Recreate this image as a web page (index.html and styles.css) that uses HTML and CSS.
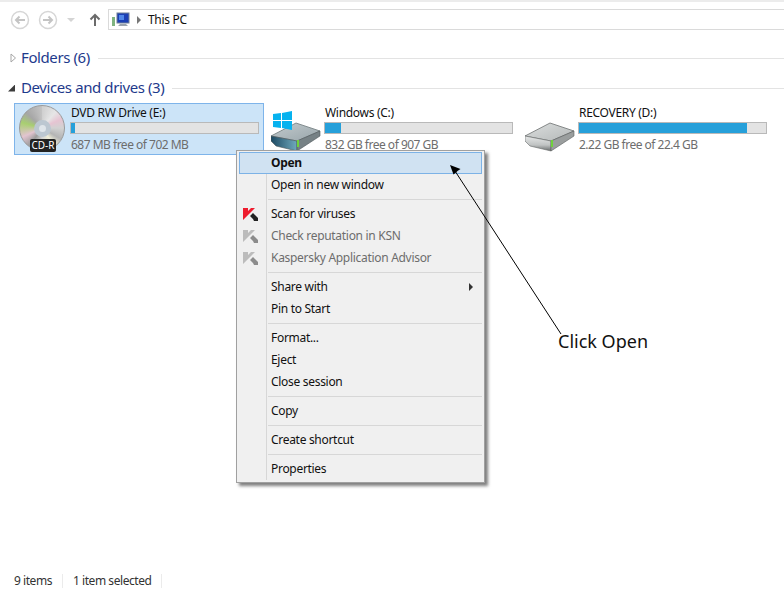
FILE: index.html
```html
<!DOCTYPE html>
<html lang="en">
<head>
  <meta charset="UTF-8">
  <title>This PC</title>
  <link rel="stylesheet" href="styles.css">
</head>
<body>
  <div class="window">
    <div class="navbar">
      <span class="nav-btn">
        <svg width="20" height="20" viewBox="0 0 20 20"><circle cx="10" cy="10" r="8.5" fill="#fff" stroke="#d6d6d6" stroke-width="1.5"/><path d="M15 10H6M9.500 6.500L6 10l3.500 3.500" fill="none" stroke="#c4c4c4" stroke-width="2"/></svg>
      </span>
      <span class="nav-btn">
        <svg width="20" height="20" viewBox="0 0 20 20"><circle cx="10" cy="10" r="8.500" fill="#fff" stroke="#d6d6d6" stroke-width="1.500"/><path d="M5 10h9M10.500 6.500L14 10l-3.500 3.500" fill="none" stroke="#c4c4c4" stroke-width="2"/></svg>
      </span>
      <span class="nav-drop"></span>
      <svg class="nav-up" width="12" height="14" viewBox="0 0 12 14"><path d="M6 13V2M1.500 6.500L6 2l4.500 4.500" fill="none" stroke="#6b6b6b" stroke-width="2"/></svg>
      <div class="address">
        <svg width="18" height="16" viewBox="0 0 18 16">
          <rect x="0" y="5" width="3" height="9" fill="#7fb37f"/>
          <rect x="5" y="1" width="12" height="10" fill="#1b3fb5" stroke="#6f7f96"/>
          <rect x="7" y="3" width="5" height="5" fill="#4f86e8"/>
          <path d="M8 12h6l2 2H6z" fill="#9aa3ad"/>
        </svg>
        <span class="crumb-arrow"></span>
        <span>This PC</span>
      </div>
    </div>

    <div class="group-head first">
      <svg class="tri-open" width="7" height="10" viewBox="0 0 7 10"><path d="M1 1l4.500 4L1 9z" fill="#fff" stroke="#a6a6a6"/></svg>
      <span class="group-title">Folders (6)</span>
      <span class="group-line"></span>
    </div>
    <div class="group-head second">
      <span class="tri-down"></span>
      <span class="group-title">Devices and drives (3)</span>
      <span class="group-line"></span>
    </div>

    <div class="drives">
      <div class="tile selected">
        <div class="tile-icon">
          <div class="disc"><div class="disc-hub"></div></div>
          <span class="cd-badge">CD-R</span>
        </div>
        <div class="tile-info">
          <div class="tile-name">DVD RW Drive (E:)</div>
          <div class="bar"><div class="bar-fill" style="width: 2%"></div></div>
          <div class="tile-sub">687 MB free of 702 MB</div>
        </div>
      </div>

      <div class="tile">
        <div class="tile-icon">
          <svg class="drive" width="50" height="44" viewBox="0 0 50 44">
            <defs>
              <linearGradient id="topC" x1="0" y1="0" x2="1" y2="1"><stop offset="0" stop-color="#c3cbce"/><stop offset="1" stop-color="#98a5aa"/></linearGradient>
              <linearGradient id="frontC" x1="0" y1="0" x2="1" y2="0"><stop offset="0" stop-color="#1d4a63"/><stop offset="1" stop-color="#6fa9bd"/></linearGradient>
            </defs>
            <g stroke-linejoin="round">
              <path d="M0 26L25 13l24 8-23 10z" fill="url(#topC)" stroke="#6d787b" stroke-width=".8"/>
              <path d="M0 26l26 5v10L5 36l-5-5z" fill="url(#frontC)" stroke="#4c5558" stroke-width=".6"/>
              <path d="M26 31l23-10v5L26 41z" fill="#768185" stroke="#4d5659" stroke-width=".6"/>
            </g>
            <rect x="26" y="30" width="2" height="7" fill="#6fd23c"/>
            <g fill="#06b2ef">
              <path d="M2 4l8-1v7H2z"/>
              <path d="M11 3l10-2v9H11z"/>
              <path d="M2 11h8v7l-8-1z"/>
              <path d="M11 11h10v9l-10-2z"/>
            </g>
          </svg>
        </div>
        <div class="tile-info">
          <div class="tile-name">Windows (C:)</div>
          <div class="bar"><div class="bar-fill" style="width: 8.300%"></div></div>
          <div class="tile-sub">832 GB free of 907 GB</div>
        </div>
      </div>

      <div class="tile">
        <div class="tile-icon">
          <svg class="drive" width="50" height="44" viewBox="0 0 50 44">
            <defs>
              <linearGradient id="topD" x1="0" y1="0" x2="1" y2="1"><stop offset="0" stop-color="#dcdfdf"/><stop offset="1" stop-color="#b4b8b8"/></linearGradient>
              <linearGradient id="frontD" x1="0" y1="0" x2="0" y2="1"><stop offset="0" stop-color="#e6e8e8"/><stop offset=".6" stop-color="#c0c3c3"/><stop offset="1" stop-color="#6a6e6e"/></linearGradient>
            </defs>
            <g stroke-linejoin="round">
              <path d="M0 26L25 13l24 8-23 10z" fill="url(#topD)" stroke="#6c7070" stroke-width=".8"/>
              <path d="M0 26l26 5v10L5 36l-5-5z" fill="url(#frontD)" stroke="#666a6a" stroke-width=".6"/>
              <path d="M26 31l23-10v5L26 41z" fill="#9a9e9e" stroke="#5a5e5e" stroke-width=".6"/>
            </g>
            <rect x="26" y="30" width="2" height="7" fill="#6fd23c"/>
          </svg>
        </div>
        <div class="tile-info">
          <div class="tile-name">RECOVERY (D:)</div>
          <div class="bar"><div class="bar-fill" style="width: 90%"></div></div>
          <div class="tile-sub">2.22 GB free of 22.4 GB</div>
        </div>
      </div>
    </div>

    <div class="spacer"></div>

    <div class="statusbar">
      <span class="status-cell">9 items</span>
      <span class="status-cell">1 item selected</span>
    </div>

    <div class="menu">
      <div class="menu-item active"><span class="menu-icon"></span><b>Open</b></div>
      <div class="menu-item"><span class="menu-icon"></span>Open in new window</div>
      <div class="menu-sep"></div>
      <div class="menu-item"><span class="menu-icon"><svg width="15" height="14" viewBox="0 0 15 14"><path d="M0 1h5v3l3-3h4L0 13z" fill="#ee1c2e"/><path d="M7 9l3-3 5 5v3h-4l-1-2z" fill="#222"/></svg></span>Scan for viruses</div>
      <div class="menu-item disabled"><span class="menu-icon"><svg width="15" height="14" viewBox="0 0 15 14"><path d="M0 1h5v3l3-3h4L0 13z" fill="#bcbcbc"/><path d="M7 9l3-3 5 5v3h-4l-1-2z" fill="#8c8c8c"/></svg></span>Check reputation in KSN</div>
      <div class="menu-item disabled"><span class="menu-icon"><svg width="15" height="14" viewBox="0 0 15 14"><path d="M0 1h5v3l3-3h4L0 13z" fill="#bcbcbc"/><path d="M7 9l3-3 5 5v3h-4l-1-2z" fill="#8c8c8c"/></svg></span>Kaspersky Application Advisor</div>
      <div class="menu-sep"></div>
      <div class="menu-item"><span class="menu-icon"></span>Share with<span class="submenu-arrow"></span></div>
      <div class="menu-item"><span class="menu-icon"></span>Pin to Start</div>
      <div class="menu-sep"></div>
      <div class="menu-item"><span class="menu-icon"></span>Format...</div>
      <div class="menu-item"><span class="menu-icon"></span>Eject</div>
      <div class="menu-item"><span class="menu-icon"></span>Close session</div>
      <div class="menu-sep"></div>
      <div class="menu-item"><span class="menu-icon"></span>Copy</div>
      <div class="menu-sep"></div>
      <div class="menu-item"><span class="menu-icon"></span>Create shortcut</div>
      <div class="menu-sep"></div>
      <div class="menu-item"><span class="menu-icon"></span>Properties</div>
    </div>

    <svg class="callout-arrow" width="120" height="175" viewBox="0 0 120 175">
      <path d="M3 3l3.500 9.500 2.500-2 1.500-1.500 3-2z" fill="#000"/>
      <path d="M8 9l106 163" fill="none" stroke="#000" stroke-width="1"/>
    </svg>
    <div class="callout">Click Open</div>
  </div>
</body>
</html>
```

FILE: styles.css
```css
html, body {
  margin: 0;
  padding: 0;
}

body {
  font-family: "Noto Sans", "Open Sans", sans-serif;
  font-size: 12px;
  letter-spacing: -0.3px;
  color: #111;
  background: #fff;
}

.window {
  position: relative;
  width: 784px;
  height: 591px;
  overflow: hidden;
  display: flex;
  flex-direction: column;
  box-sizing: border-box;
  border-top: 2px solid #ececec;
}

/* nav bar */
.navbar {
  display: flex;
  align-items: center;
  height: 21px;
  margin-top: 7px;
  padding-left: 10px;
}

.nav-btn {
  display: flex;
  width: 20px;
  height: 20px;
  margin-right: 8px;
}

.nav-drop {
  width: 0;
  height: 0;
  margin-left: 1px;
  border-left: 4px solid transparent;
  border-right: 4px solid transparent;
  border-top: 4px solid #d4d4d4;
}

.nav-up {
  margin-left: 14px;
}

.address {
  display: flex;
  align-items: center;
  flex: 1;
  height: 21px;
  margin-left: 7px;
  padding-left: 3px;
  box-sizing: border-box;
  border: 1px solid #dadada;
  border-right: none;
}

.crumb-arrow {
  width: 0;
  height: 0;
  margin: 0 7px 0 7px;
  border-top: 4px solid transparent;
  border-bottom: 4px solid transparent;
  border-left: 4px solid #777;
}

/* groups */
.group-head {
  display: flex;
  align-items: center;
  height: 22px;
  padding-left: 8px;
}

.group-head.first {
  margin-top: 17px;
}

.group-head.second {
  margin-top: 8px;
}

.group-title {
  margin-left: 6px;
  padding-bottom: 2px;
  font-size: 15px;
  letter-spacing: -0.4px;
  color: #1e3a8c;
}

.group-line {
  flex: 1;
  height: 1px;
  margin-left: 8px;
  background: #e3e3e3;
}

.tri-open {
  margin-left: 2px;
  margin-right: -2px;
  flex: none;
}

.tri-down {
  width: 7px;
  height: 7px;
  background: #3c3c3c;
  clip-path: polygon(100% 0, 100% 100%, 0 100%);
}

/* drive tiles */
.drives {
  display: flex;
  margin-top: 4px;
  padding-left: 14px;
}

.tile {
  display: flex;
  width: 250px;
  height: 52px;
  margin-right: 4px;
  box-sizing: border-box;
  border: 1px solid transparent;
}

.tile.selected {
  background: #cce4f8;
  border-color: #7eb4ea;
}

.tile-icon {
  position: relative;
  width: 55px;
  height: 50px;
  flex: none;
}

.tile .drive {
  display: block;
  margin-left: 2px;
  margin-top: 6px;
}

.tile-info {
  width: 189px;
}

.tile-name {
  height: 18px;
  padding-left: 1px;
  line-height: 18px;
  color: #111;
}

.bar {
  height: 12px;
  box-sizing: border-box;
  background: #e3e3e3;
  border: 1px solid #b9b9b9;
}

.bar-fill {
  height: 100%;
  background: #26a0da;
}

.tile-sub {
  height: 20px;
  padding-left: 1px;
  padding-top: 1px;
  line-height: 20px;
  letter-spacing: -0.5px;
  color: #6d6d6d;
}

.disc {
  position: absolute;
  left: 4px;
  top: 1px;
  width: 46px;
  height: 46px;
  border-radius: 50%;
  box-sizing: border-box;
  border: 1px solid #9a9a9a;
  background: conic-gradient(from 0deg, #cfcfcf, #e6e6e6 40deg, #e6c4d2 65deg, #d2d2d2 90deg, #b4b4b4 120deg, #f0eed8 145deg, #d4d4d4 180deg, #9c9c9c 215deg, #e2c4d0 245deg, #a8cf70 285deg, #a6a6a6 315deg, #c4c4c4 360deg);
  display: flex;
  align-items: center;
  justify-content: center;
}

.disc-hub {
  width: 17px;
  height: 17px;
  border-radius: 50%;
  background: #dfe5ea;
  border: 5px solid #bcc7d1;
  box-sizing: border-box;
}

.cd-badge {
  position: absolute;
  left: 15px;
  top: 35px;
  width: 26px;
  height: 13px;
  line-height: 13px;
  text-align: center;
  font-size: 10px;
  letter-spacing: 0;
  color: #fff;
  background: #222;
  border-radius: 2px;
}

.spacer {
  flex: 1;
}

/* status bar */
.statusbar {
  display: flex;
  height: 17px;
  margin-bottom: 1px;
  padding-left: 14px;
  letter-spacing: -0.45px;
  color: #333;
}

.status-cell {
  height: 14px;
  line-height: 14px;
  margin-top: 1px;
  padding-right: 10px;
  margin-right: 10px;
  border-right: 1px solid #ebebeb;
}

/* context menu */
.menu {
  position: absolute;
  left: 236px;
  top: 148px;
  width: 249px;
  padding: 1px 2px 2px;
  box-sizing: border-box;
  background: #f0f0f0;
  border: 1px solid #a0a0a0;
  box-shadow: 3px 3px 3px rgba(0, 0, 0, 0.5);
}

.menu::before {
  content: "";
  position: absolute;
  left: 29px;
  top: 2px;
  bottom: 2px;
  width: 1px;
  background: #d7d7d7;
}

.menu-item {
  position: relative;
  display: flex;
  align-items: center;
  height: 22px;
  padding-bottom: 2px;
  box-sizing: border-box;
  color: #111;
}

.menu-item.active {
  background: #d0e2f2;
  outline: 1px solid #7cb2e6;
  outline-offset: -1px;
}

.menu-item.disabled {
  color: #6d6d6d;
}

.menu-item b {
  font-weight: 700;
}

.menu-icon {
  display: flex;
  align-items: center;
  width: 32px;
  flex: none;
  margin-top: 2px;
  padding-left: 4px;
  box-sizing: border-box;
}

.menu-sep {
  height: 1px;
  margin: 3px 0 3px 29px;
  background: #d7d7d7;
}

.submenu-arrow {
  position: absolute;
  right: 9px;
  top: 7px;
  width: 0;
  height: 0;
  border-top: 4px solid transparent;
  border-bottom: 4px solid transparent;
  border-left: 4px solid #333;
}

/* annotation */
.callout-arrow {
  position: absolute;
  left: 447px;
  top: 160px;
}

.callout {
  position: absolute;
  left: 558px;
  top: 327px;
  font-size: 18px;
  letter-spacing: 0;
  line-height: 24px;
  color: #111;
}
```
